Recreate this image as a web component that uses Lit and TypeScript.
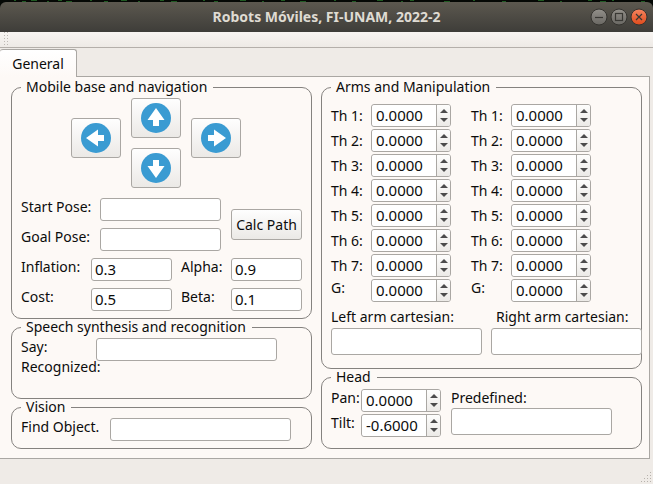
import { LitElement, html, svg, css } from "lit";
import { customElement, property } from "lit/decorators.js";

const controls = css`
  * {
    box-sizing: border-box;
  }
  input,
  button {
    font: inherit;
    color: inherit;
    margin: 0;
  }
  input {
    width: 100%;
    min-width: 0;
    height: 23px;
    padding: 0 3px 2px;
    border: 1px solid #aaa7a3;
    border-radius: 3px;
    background: #fff;
    outline: none;
    font-size: 15px;
  }
  input:focus-visible,
  button:focus-visible {
    border-color: #f07746;
  }
  label {
    white-space: nowrap;
  }
`;

@customElement("spin-box")
class SpinBox extends LitElement {
  @property() label = "";
  @property() value = "0.0000";

  static styles = [
    controls,
    css`
      :host {
        display: flex;
      }
      :host([center]) label {
        line-height: 23px;
      }
      label {
        flex: 1;
      }
      .box {
        display: flex;
        flex: none;
        width: 80px;
        height: 23px;
        border: 1px solid #aaa7a3;
        border-radius: 3px;
        background: #fff;
        overflow: hidden;
      }
      input {
        flex: 1;
        height: 21px;
        border: 0;
        padding: 0 0 2px 4px;
        appearance: textfield;
      }
      input::-webkit-inner-spin-button {
        display: none;
      }
      .steps {
        display: flex;
        flex-direction: column;
        flex: none;
        width: 14px;
        border-left: 1px solid #aaa7a3;
        background: linear-gradient(#fdfdfc, #eceae7);
      }
      button {
        flex: 1;
        display: flex;
        align-items: center;
        justify-content: center;
        padding: 0;
        border: 0;
        background: none;
      }
      .up {
        align-items: flex-end;
        padding-bottom: 2px;
      }
      .down {
        align-items: flex-start;
        padding-top: 3px;
      }
      svg {
        display: block;
        fill: #4c4c4c;
      }
    `,
  ];

  private step(by: number) {
    this.value = (Number(this.value) + by).toFixed(4);
  }

  render() {
    return html`
      <label for="field">${this.label}</label>
      <div class="box">
        <input id="field" type="number" step="0.0001" .value=${this.value}
          @change=${(e: Event) => (this.value = (e.target as HTMLInputElement).value)} />
        <div class="steps">
          <button class="up" type="button" aria-label="Increase" @click=${() => this.step(0.1)}>
            <svg width="8" height="4" viewBox="0 0 8 4"><path d="M0 4 4 0 8 4Z" /></svg>
          </button>
          <button class="down" type="button" aria-label="Decrease" @click=${() => this.step(-0.1)}>
            <svg width="8" height="4" viewBox="0 0 8 4"><path d="M0 0 4 4 8 0Z" /></svg>
          </button>
        </div>
      </div>
    `;
  }
}

const arrow = (angle: number) => html`
  <svg width="30" height="30" viewBox="0 0 30 30" aria-hidden="true">
    <circle cx="15" cy="15" r="15" fill="#3a9bd2" />
    <path d="M15 5 23.500 17H18V23H12V17H6.500Z" fill="#fff" transform="rotate(${angle} 15 15)" />
  </svg>
`;

const specks = [14, 22, 31, 47, 58, 66, 90, 104, 121, 138, 160, 171, 203, 214, 240, 262, 281, 300,
  334, 352, 377, 401, 410, 444, 473, 502, 538, 560, 588, 600, 612, 641];

const joints = ["Th 1:", "Th 2:", "Th 3:", "Th 4:", "Th 5:", "Th 6:", "Th 7:"];

@customElement("app-root")
class AppRoot extends LitElement {
  static styles = [
    controls,
    css`
      :host {
        display: flex;
        flex-direction: column;
        min-height: 100vh;
        box-sizing: border-box;
        background: #efebe7;
        color: #0c0c0c;
        font: 14px/17px "Noto Sans", sans-serif;
      }
      .desktop {
        background: #050805;
      }
      .specks {
        display: block;
        width: 100%;
        height: 2px;
      }
      .titlebar {
        display: grid;
        grid-template-columns: 1fr auto 1fr;
        align-items: center;
        height: 30px;
        padding: 0 5px;
        border-radius: 6px 6px 0 0;
        background: linear-gradient(#5c584f, #3e3d39);
      }
      h1 {
        grid-column: 2;
        margin: 0;
        font-size: 14px;
        line-height: 20px;
        color: #dfdbd2;
      }
      .window-buttons {
        display: flex;
        justify-content: flex-end;
        gap: 2px;
      }
      .window-buttons button {
        width: 18px;
        height: 18px;
        padding: 0;
        border: 0;
        background: none;
      }
      .window-buttons svg {
        display: block;
      }
      .toolbar {
        height: 16px;
        padding-left: 4px;
        border-bottom: 1px solid #b4afaa;
        background: linear-gradient(#f8f5f2, #eeeae6);
      }
      .handle {
        display: block;
      }
      .tabs {
        display: flex;
        padding-top: 1px;
      }
      .tab {
        height: 28px;
        width: 77px;
        padding: 0;
        margin-bottom: -1px;
        border: 1px solid #aaa7a3;
        border-bottom: 0;
        border-left: 0;
        border-radius: 3px 3px 0 0;
        background: linear-gradient(#ffffff, #fdf9f6);
        z-index: 1;
      }
      .pane {
        display: grid;
        grid-template-columns: 301fr 321fr;
        gap: 9px;
        margin-right: 3px;
        padding: 2px 7px 9px 11px;
        border: 1px solid #aaa7a3;
        border-left: 0;
        background: #fdf9f6;
      }
      .column {
        display: flex;
        flex-direction: column;
        min-width: 0;
      }
      fieldset {
        min-width: 0;
        margin: 0;
        padding: 3px 9px 7px;
        border: 1px solid #85827f;
        border-radius: 10px;
      }
      legend {
        height: 16px;
        padding: 0 6px 0 5px;
        line-height: 16px;
      }
      .pad {
        display: flex;
        align-items: center;
        gap: 10px;
        padding-left: 50px;
        margin-bottom: 10px;
      }
      .pad-middle {
        display: flex;
        flex-direction: column;
        gap: 10px;
      }
      .push {
        display: flex;
        align-items: center;
        justify-content: center;
        padding: 0;
        border: 1px solid #aaa7a3;
        border-radius: 3px;
        background: linear-gradient(#fefefe, #ebe9e6);
      }
      .arrow {
        width: 50px;
        height: 40px;
      }
      .sideways {
        margin-bottom: 10px;
      }
      .poses {
        display: flex;
        align-items: center;
        gap: 10px;
        margin-bottom: 7px;
      }
      .pose-fields {
        flex: 1;
        display: grid;
        grid-template-columns: 79px 1fr;
        row-gap: 7px;
      }
      .calc {
        width: 71px;
        height: 31px;
      }
      .params {
        display: grid;
        grid-template-columns: 70px 1fr 50px 71px;
        row-gap: 7px;
      }
      .first-field {
        padding-right: 9px;
      }
      .speech {
        display: grid;
        grid-template-columns: 75px 181px;
        grid-template-rows: 20px 20px;
        padding-bottom: 20px;
        white-space: nowrap;
      }
      .vision {
        display: grid;
        grid-template-columns: 89px 181px;
      }
      .arms {
        padding: 9px 0 13px 9px;
      }
      .sides {
        display: flex;
        gap: 20px;
      }
      .side {
        display: flex;
        flex-direction: column;
        gap: 2px;
        width: 120px;
      }
      .cartesian {
        display: grid;
        grid-template-columns: 1fr 1fr;
        column-gap: 9px;
        row-gap: 3px;
        margin: 6px -1px 0 0;
      }
      .cartesian .right {
        padding-left: 5px;
      }
      .tall {
        height: 27px;
      }
      .head {
        display: flex;
        gap: 10px;
        padding: 4px 9px 11px;
      }
      .angles {
        display: flex;
        flex-direction: column;
        gap: 2px;
        width: 110px;
      }
      .predefined {
        display: flex;
        flex-direction: column;
        gap: 2px;
        width: 161px;
      }
      .status {
        flex: 1;
        display: flex;
        align-items: flex-end;
        justify-content: flex-end;
      }
    `,
  ];

  private side() {
    return html`
      <div class="side">
        ${joints.map((name) => html`<spin-box center label=${name}></spin-box>`)}
        <spin-box label="G:"></spin-box>
      </div>
    `;
  }

  private windowButtons() {
    const glyphs = [
      ["Minimize", svg`<path d="M5 9.500H13" />`],
      ["Maximize", svg`<rect x="5.500" y="5.500" width="7" height="7" />`],
      ["Close", svg`<path d="M6 6 12 12M12 6 6 12" />`],
    ] as const;
    return glyphs.map(
      ([name, glyph]) => html`
        <button type="button" aria-label=${name}>
          <svg width="18" height="18" viewBox="0 0 18 18">
            <defs>
              <linearGradient id="shade-${name}" x2="0" y2="1">
                <stop stop-color=${name === "Close" ? "#f58560" : "#93908a"} />
                <stop offset="1" stop-color=${name === "Close" ? "#de4a1b" : "#696762"} />
              </linearGradient>
            </defs>
            <circle cx="9" cy="9" r="8" fill="url(#shade-${name})" stroke="#34332f" />
            <g fill="none" stroke="#393834" stroke-width="1.200">${glyph}</g>
          </svg>
        </button>
      `
    );
  }

  render() {
    return html`
      <header class="desktop">
        <svg class="specks" aria-hidden="true">
          ${specks.map((x, i) => svg`<rect x=${x} width=${2 + (i % 3) * 2} height="1" y=${i % 2} fill="#1f5a22" />`)}
        </svg>
        <div class="titlebar">
          <h1>Robots Móviles, FI-UNAM, 2022-2</h1>
          <div class="window-buttons">${this.windowButtons()}</div>
        </div>
      </header>
      <div class="toolbar">
        <svg class="handle" width="4" height="15" fill="#bdb8b3" aria-hidden="true">
          ${[0, 3, 6, 9, 12].map(
            (y) => svg`<rect y=${y} width="1" height="1" /><rect x="3" y=${y} width="1" height="1" />`
          )}
        </svg>
      </div>
      <nav class="tabs" role="tablist">
        <button class="tab" type="button" role="tab" aria-selected="true">General</button>
      </nav>
      <main class="pane">
        <div class="column">
          <fieldset>
            <legend>Mobile base and navigation</legend>
            <div class="pad">
              <button class="push arrow sideways" type="button" aria-label="Left">${arrow(270)}</button>
              <div class="pad-middle">
                <button class="push arrow" type="button" aria-label="Forward">${arrow(0)}</button>
                <button class="push arrow" type="button" aria-label="Backward">${arrow(180)}</button>
              </div>
              <button class="push arrow sideways" type="button" aria-label="Right">${arrow(90)}</button>
            </div>
            <div class="poses">
              <div class="pose-fields">
                <label for="start">Start Pose:</label><input id="start" type="text" />
                <label for="goal">Goal Pose:</label><input id="goal" type="text" />
              </div>
              <button class="push calc" type="button">Calc Path</button>
            </div>
            <div class="params">
              <label for="inflation">Inflation:</label>
              <div class="first-field"><input id="inflation" type="text" value="0.3" /></div>
              <label for="alpha">Alpha:</label><input id="alpha" type="text" value="0.9" />
              <label for="cost">Cost:</label>
              <div class="first-field"><input id="cost" type="text" value="0.5" /></div>
              <label for="beta">Beta:</label><input id="beta" type="text" value="0.1" />
            </div>
          </fieldset>
          <fieldset class="speech">
            <legend>Speech synthesis and recognition</legend>
            <label for="say">Say:</label><input id="say" type="text" />
            <span>Recognized:</span>
          </fieldset>
          <fieldset class="vision">
            <legend>Vision</legend>
            <label for="find">Find Object.</label><input id="find" type="text" />
          </fieldset>
        </div>
        <div class="column">
          <fieldset class="arms">
            <legend>Arms and Manipulation</legend>
            <div class="sides">${this.side()}${this.side()}</div>
            <div class="cartesian">
              <label for="left-arm">Left arm cartesian:</label>
              <label class="right" for="right-arm">Right arm cartesian:</label>
              <input class="tall" id="left-arm" type="text" />
              <input class="tall" id="right-arm" type="text" />
            </div>
          </fieldset>
          <fieldset class="head">
            <legend>Head</legend>
            <div class="angles">
              <spin-box label="Pan:"></spin-box>
              <spin-box label="Tilt:" value="-0.6000"></spin-box>
            </div>
            <div class="predefined">
              <label for="predefined">Predefined:</label>
              <input class="tall" id="predefined" type="text" />
            </div>
          </fieldset>
        </div>
      </main>
      <footer class="status">
        <svg width="13" height="12" viewBox="0 0 13 12" fill="#b7b2ac" aria-hidden="true">
          ${[0, 1, 2, 3].map((r) =>
            Array.from({ length: r + 1 }, (_, c) => svg`<rect x=${10 - c * 3} y=${r * 3} width="1" height="1" />`)
          )}
        </svg>
      </footer>
    `;
  }
}
